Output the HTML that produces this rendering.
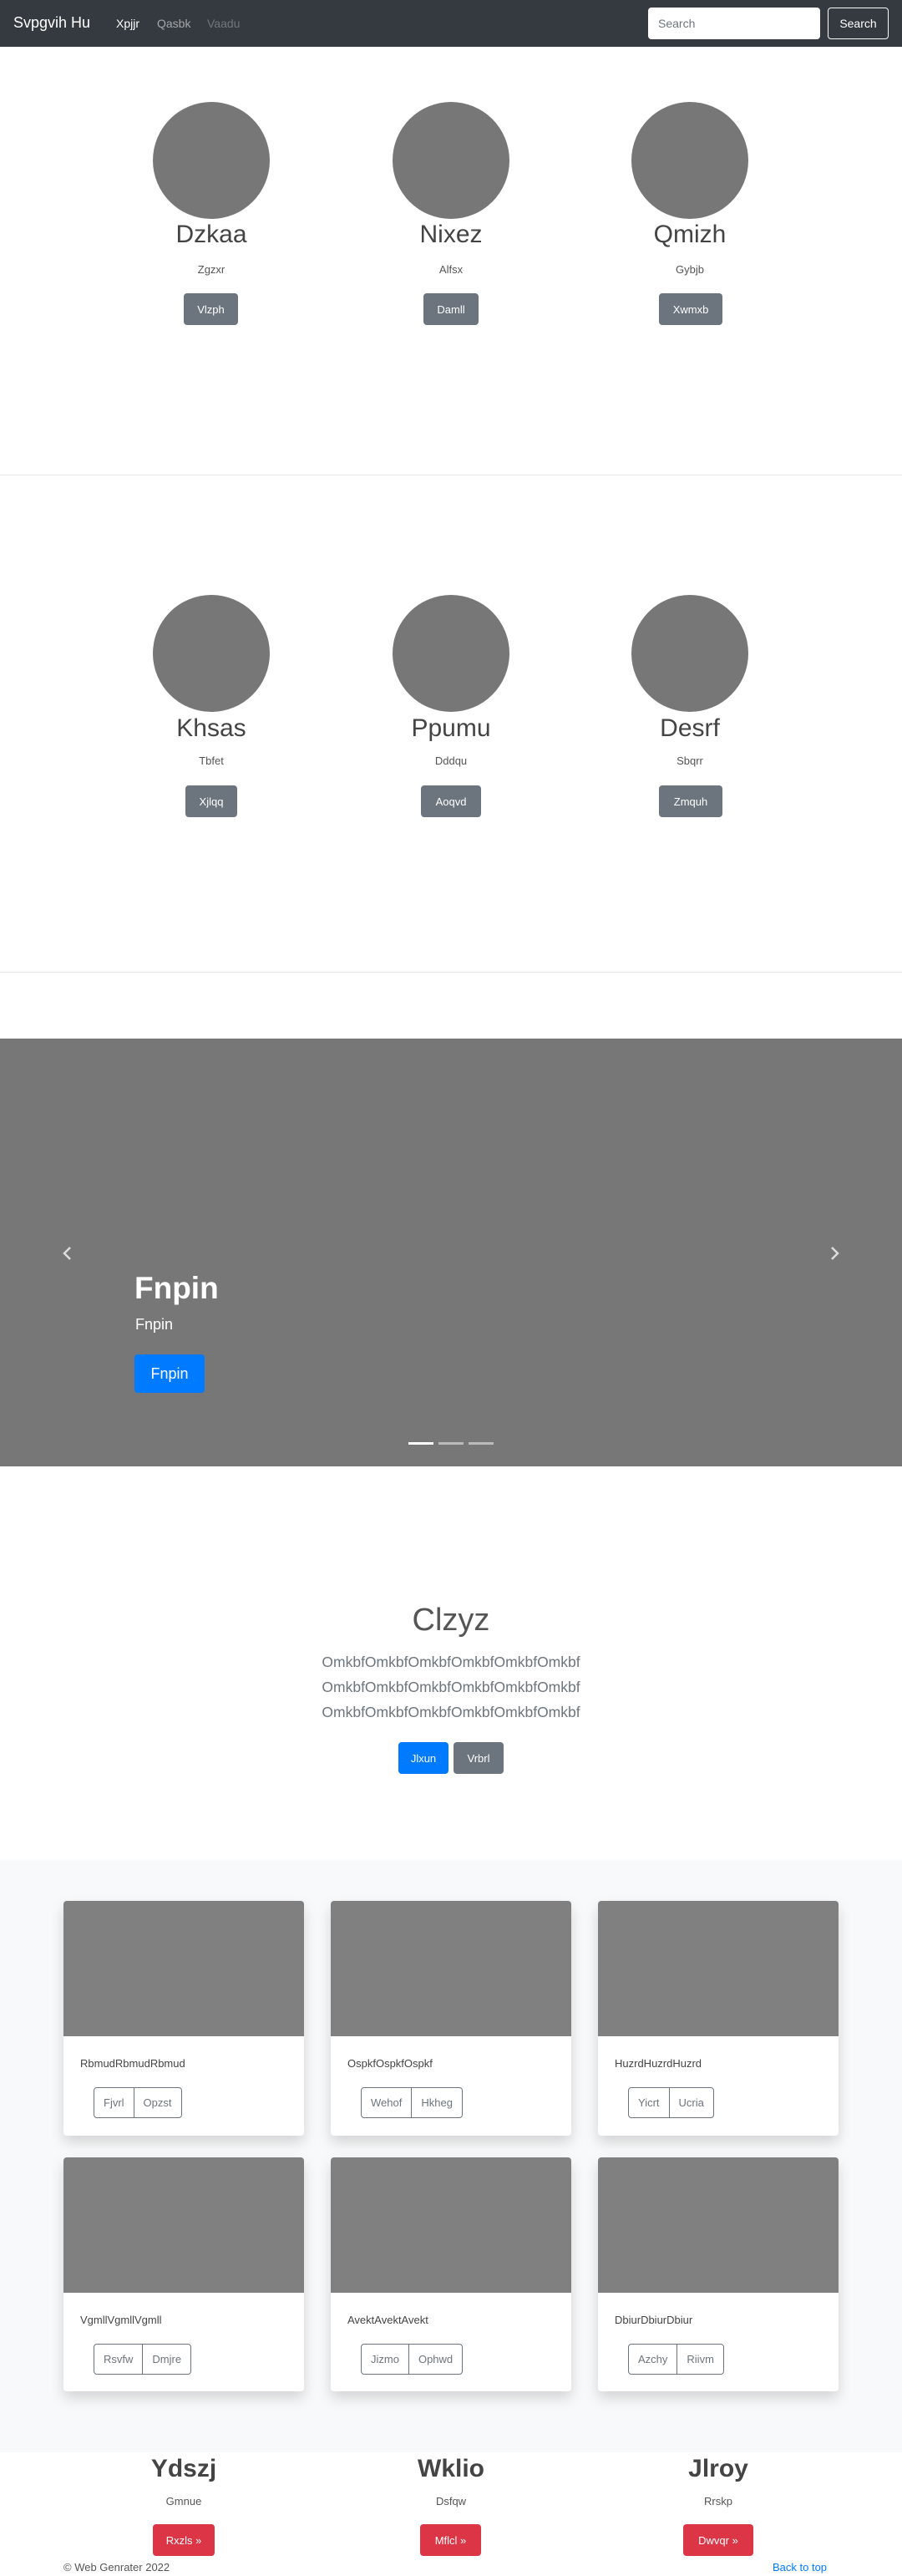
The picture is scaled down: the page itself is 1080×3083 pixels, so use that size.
<!DOCTYPE html>
<html><head><meta charset="utf-8"><style>
*{box-sizing:border-box;margin:0;padding:0}
body{width:1080px;height:3083px;position:relative;font-family:"Liberation Sans",sans-serif;color:#212529;background:#fff;overflow:hidden}
.a{position:absolute}
.c{text-align:center}
.nav{left:0;top:0;width:1080px;height:56px;background:#343a40}
.circ{width:140px;height:140px;border-radius:50%;background:#777}
.btn{position:absolute;display:flex;align-items:center;justify-content:center;border-radius:4px;color:#fff;font-size:13px}
.sec{background:#6c757d}
.card{position:absolute;width:288px;background:#fff;border-radius:4px;box-shadow:0 8px 16px rgba(0,0,0,.15);overflow:hidden}
.card .img{height:162px;background:#808080}
.card .t{position:absolute;left:20px;top:187px;font-size:13px;color:#444}
.bg{position:absolute;left:36px;top:223px;display:flex;border:1px solid #6c757d;border-radius:4px;height:37px}
.bg span{padding:0 11px;display:flex;align-items:center;font-size:13px;color:#6c757d}
.bg span+span{border-left:1px solid #6c757d}
.h{font-size:30px;font-weight:300;color:#444}
.s{font-size:13px;color:#555}
</style></head><body>
<div class="a nav">
<div class="a" style="left:16px;top:17px;color:#fff;font-size:18px">Svpgvih Hu</div>
<div class="a" style="left:139px;top:20px;color:#fff;font-size:14px">Xpjjr</div>
<div class="a" style="left:188px;top:20px;color:rgba(255,255,255,.55);font-size:14px">Qasbk</div>
<div class="a" style="left:248px;top:20px;color:rgba(255,255,255,.3);font-size:14px">Vaadu</div>
<div class="a" style="left:776px;top:9px;width:206px;height:38px;background:#fff;border-radius:4px;padding:11px 12px;font-size:14px;color:#6c757d">Search</div>
<div class="a" style="left:991px;top:9px;width:73px;height:38px;border:1px solid #f8f9fa;border-radius:4px;color:#fff;font-size:14px;text-align:center;line-height:36px">Search</div>
</div>

<div class="a" style="left:0;top:568px;width:1080px;height:1px;background:#e5e5e5"></div>
<div class="a" style="left:0;top:1163px;width:1080px;height:1px;background:#e5e5e5"></div>

<div class="a circ" style="left:183px;top:122px"></div>
<div class="a circ" style="left:470px;top:122px"></div>
<div class="a circ" style="left:756px;top:122px"></div>
<div class="a c h" style="left:113px;top:264px;width:280px">Dzkaa</div>
<div class="a c h" style="left:400px;top:264px;width:280px">Nixez</div>
<div class="a c h" style="left:686px;top:264px;width:280px">Qmizh</div>
<div class="a c s" style="left:113px;top:315px;width:280px">Zgzxr</div>
<div class="a c s" style="left:400px;top:315px;width:280px">Alfsx</div>
<div class="a c s" style="left:686px;top:315px;width:280px">Gybjb</div>
<div class="btn sec" style="left:220px;top:351px;width:65px;height:38px">Vlzph</div>
<div class="btn sec" style="left:507px;top:351px;width:66px;height:38px">Damll</div>
<div class="btn sec" style="left:789px;top:351px;width:76px;height:38px">Xwmxb</div>

<div class="a circ" style="left:183px;top:712px"></div>
<div class="a circ" style="left:470px;top:712px"></div>
<div class="a circ" style="left:756px;top:712px"></div>
<div class="a c h" style="left:113px;top:855px;width:280px">Khsas</div>
<div class="a c h" style="left:400px;top:855px;width:280px">Ppumu</div>
<div class="a c h" style="left:686px;top:855px;width:280px">Desrf</div>
<div class="a c s" style="left:113px;top:903px;width:280px">Tbfet</div>
<div class="a c s" style="left:400px;top:903px;width:280px">Dddqu</div>
<div class="a c s" style="left:686px;top:903px;width:280px">Sbqrr</div>
<div class="btn sec" style="left:222px;top:940px;width:62px;height:38px">Xjlqq</div>
<div class="btn sec" style="left:504px;top:940px;width:72px;height:38px">Aoqvd</div>
<div class="btn sec" style="left:789px;top:940px;width:76px;height:38px">Zmquh</div>

<div class="a" style="left:0;top:1243px;width:1080px;height:512px;background:#777">
<svg class="a" style="left:73px;top:248px" width="16" height="18" viewBox="0 0 16 18"><path d="M11 2 L4 9 L11 16" stroke="#ddd" stroke-width="2.5" fill="none"/></svg>
<svg class="a" style="left:991px;top:248px" width="16" height="18" viewBox="0 0 16 18"><path d="M5 2 L12 9 L5 16" stroke="#ddd" stroke-width="2.5" fill="none"/></svg>
<div class="a" style="left:161px;top:278px;font-size:37px;font-weight:bold;color:#fff">Fnpin</div>
<div class="a" style="left:162px;top:332px;font-size:18px;color:#fff">Fnpin</div>
<div class="btn" style="left:161px;top:378px;width:84px;height:46px;background:#007bff;font-size:18px">Fnpin</div>
<div class="a" style="left:489px;top:483px;width:30px;height:3px;background:#fff"></div>
<div class="a" style="left:525px;top:483px;width:30px;height:3px;background:rgba(255,255,255,.5)"></div>
<div class="a" style="left:561px;top:483px;width:30px;height:3px;background:rgba(255,255,255,.5)"></div>
</div>

<div class="a c" style="left:0;top:1918px;width:1080px;font-size:38px;font-weight:300;color:#555">Clzyz</div>
<div class="a c" style="left:0;top:1974px;width:1080px;font-size:17.5px;font-weight:300;line-height:30px;color:#6c757d">OmkbfOmkbfOmkbfOmkbfOmkbfOmkbf<br>OmkbfOmkbfOmkbfOmkbfOmkbfOmkbf<br>OmkbfOmkbfOmkbfOmkbfOmkbfOmkbf</div>
<div class="btn" style="left:477px;top:2085px;width:60px;height:38px;background:#007bff">Jlxun</div>
<div class="btn sec" style="left:543px;top:2085px;width:60px;height:38px">Vrbrl</div>

<div class="a" style="left:0;top:2226px;width:1080px;height:709px;background:#f8f9fa"></div>
<div class="card" style="left:76px;top:2275px;height:281px"><div class="img"></div><div class="t">RbmudRbmudRbmud</div><div class="bg"><span>Fjvrl</span><span>Opzst</span></div></div>
<div class="card" style="left:396px;top:2275px;height:281px"><div class="img"></div><div class="t">OspkfOspkfOspkf</div><div class="bg"><span>Wehof</span><span>Hkheg</span></div></div>
<div class="card" style="left:716px;top:2275px;height:281px"><div class="img"></div><div class="t">HuzrdHuzrdHuzrd</div><div class="bg"><span>Yicrt</span><span>Ucria</span></div></div>
<div class="card" style="left:76px;top:2582px;height:280px"><div class="img"></div><div class="t">VgmllVgmllVgmll</div><div class="bg"><span>Rsvfw</span><span>Dmjre</span></div></div>
<div class="card" style="left:396px;top:2582px;height:280px"><div class="img"></div><div class="t">AvektAvektAvekt</div><div class="bg"><span>Jizmo</span><span>Ophwd</span></div></div>
<div class="card" style="left:716px;top:2582px;height:280px"><div class="img"></div><div class="t">DbiurDbiurDbiur</div><div class="bg"><span>Azchy</span><span>Riivm</span></div></div>

<div class="a c" style="left:80px;top:2938px;width:280px;font-size:30px;font-weight:bold;color:#444">Ydszj</div>
<div class="a c" style="left:400px;top:2938px;width:280px;font-size:30px;font-weight:bold;color:#444">Wklio</div>
<div class="a c" style="left:720px;top:2938px;width:280px;font-size:30px;font-weight:bold;color:#444">Jlroy</div>
<div class="a c s" style="left:80px;top:2986px;width:280px">Gmnue</div>
<div class="a c s" style="left:400px;top:2986px;width:280px">Dsfqw</div>
<div class="a c s" style="left:720px;top:2986px;width:280px">Rrskp</div>
<div class="btn" style="left:183px;top:3021px;width:74px;height:38px;background:#dc3545">Rxzls »</div>
<div class="btn" style="left:503px;top:3021px;width:73px;height:38px;background:#dc3545">Mflcl »</div>
<div class="btn" style="left:818px;top:3021px;width:84px;height:38px;background:#dc3545">Dwvqr »</div>
<div class="a" style="left:76px;top:3065px;font-size:13px;color:#555">© Web Genrater 2022</div>
<div class="a" style="left:925px;top:3065px;font-size:13px;color:#007bff">Back to top</div>
</body></html>
